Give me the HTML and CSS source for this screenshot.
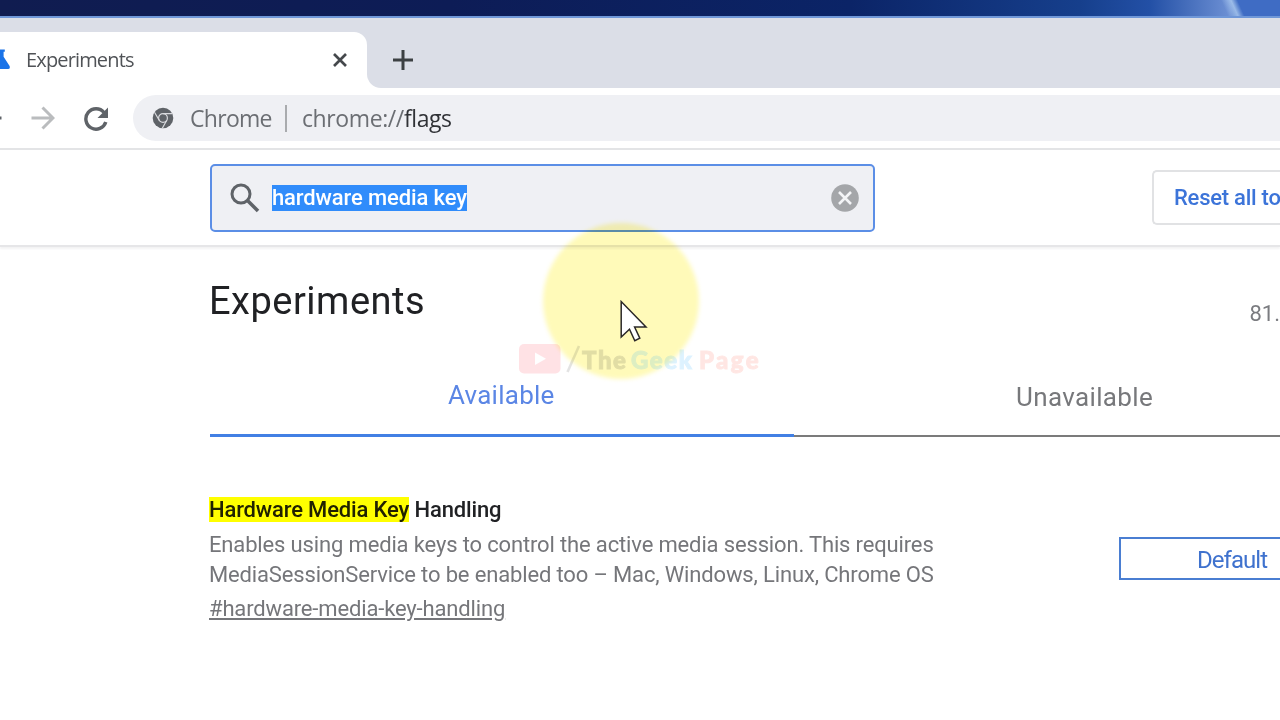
FILE: index.html
```
<!DOCTYPE html>
<html lang="en">
<head>
    <meta charset="UTF-8">
    <meta name="viewport" content="width=device-width, initial-scale=1.0">
    <title>Experiments</title>
    <link rel="stylesheet" href="styles.css">
</head>
<body>
    <div class="desktop"></div>

    <div class="tab-strip">
        <div class="tab-wrap">
            <div class="tab">
                <svg class="flask" width="10" height="22" viewBox="0 0 10 22">
                    <path d="M0 .5h4.800v2.200H3.600v5L9.600 17Q10.500 20 8 20H0z" fill="#1a73e8"/>
                </svg>
                <span class="tab-title">Experiments</span>
                <svg class="tab-close" width="16" height="16" viewBox="0 0 16 16">
                    <path d="M2 2l12 12M14 2L2 14" stroke="#45484c" stroke-width="2.700"/>
                </svg>
            </div>
        </div>
        <div class="strip-rest">
            <svg width="20" height="20" viewBox="0 0 20 20">
                <path d="M10 0v20M0 10h20" stroke="#3c4043" stroke-width="3"/>
            </svg>
        </div>
    </div>

    <div class="toolbar">
        <svg class="back" width="2" height="4" viewBox="0 0 2 4">
            <path d="M0 .5h1.500v3H0z" fill="#5f6368"/>
        </svg>
        <svg class="forward" width="24" height="24" viewBox="0 0 24 24">
            <path d="M.5 12H22M11.500 1.500L22 12 11.500 22.500" fill="none" stroke="#babcbe" stroke-width="3"/>
        </svg>
        <svg class="reload" width="26" height="26" viewBox="0 0 26 26">
            <path d="M21 6.500A10.200 10.200 0 1 0 22.800 16" fill="none" stroke="#5f6368" stroke-width="3.400"/>
            <path d="M25 1.500v10.500H14.500z" fill="#5f6368"/>
        </svg>
        <div class="omnibox">
            <svg class="chrome-logo" width="22" height="22" viewBox="0 0 22 22">
                <circle cx="11" cy="11" r="10.300" fill="#5f6368"/>
                <circle cx="11" cy="11" r="4.400" fill="#5f6368" stroke="#d9dade" stroke-width="1.200"/>
                <path d="M11 6.600h9.300M7.200 13.200L2.500 5.200M14.800 13.200l-4.500 8" stroke="#d9dade" stroke-width="1.200"/>
            </svg>
            <span class="site-name">Chrome</span>
            <span class="divider"></span>
            <span class="address">chrome://<b>flags</b></span>
        </div>
    </div>

    <header class="flags-header">
        <div class="search">
            <svg class="search-icon" width="30" height="30" viewBox="0 0 30 30">
                <circle cx="11" cy="11" r="9" fill="none" stroke="#5f6368" stroke-width="3"/>
                <path d="M17.500 17.500L28 28" stroke="#5f6368" stroke-width="3.600"/>
            </svg>
            <span class="query">hardware media key</span>
            <svg class="clear" width="28" height="28" viewBox="0 0 28 28">
                <circle cx="14" cy="14" r="13.800" fill="#a4a6a9"/>
                <path d="M8 8l12 12M20 8L8 20" stroke="#f3f4f6" stroke-width="2.600"/>
            </svg>
        </div>
        <button class="reset">Reset all to</button>
    </header>

    <main>
        <div class="title-row">
            <h1>Experiments</h1>
            <span class="version">81.</span>
        </div>

        <div class="tabs">
            <div class="tabs-item selected">Available</div>
            <div class="tabs-item unselected">Unavailable</div>
        </div>

        <div class="experiment">
            <div class="info">
                <h3><mark>Hardware Media Key</mark> Handling</h3>
                <p>Enables using media keys to control the active media session. This requires</p>
                <p>MediaSessionService to be enabled too – Mac, Windows, Linux, Chrome OS</p>
                <a class="permalink">#hardware-media-key-handling</a>
            </div>
            <div class="select">Default</div>
        </div>
    </main>

    <!-- click highlight, channel watermark and pointer lie over the page -->
    <div class="spotlight"></div>
    <div class="watermark">
        <svg width="42" height="30" viewBox="0 0 42 30">
            <rect width="41.500" height="29.500" rx="5" fill="#ff2742"/>
            <path d="M16 8.500l11 6.300-11 6.300z" fill="#fff"/>
        </svg>
        <svg class="slash" width="16" height="28" viewBox="0 0 16 28">
            <path d="M1.500 27L13 1" stroke="#333" stroke-width="2.600"/>
        </svg>
        <span class="the">The</span>
        <span class="geek">Geek</span>
        <span class="page">Page</span>
    </div>
    <svg class="pointer" width="28" height="44" viewBox="0 0 28 44">
        <path d="M1.200 2.500V38l8.300-7.800 5.300 11.500 5-2.500-5.200-11.200H26z" fill="#fff" stroke="#2b2828" stroke-width="1.500"/>
    </svg>
</body>
</html>
```
FILE: styles.css
```
        * {
            box-sizing: border-box;
        }
        body {
            font-family: Roboto, "Liberation Sans", sans-serif;
            margin: 0;
            width: 1280px;
            height: 720px;
            overflow: hidden;
            position: relative;
            background-color: #fff;
            color: #202124;
            white-space: nowrap;
        }
        svg {
            display: block;
            flex: none;
        }
        .desktop {
            height: 18px;
            border-bottom: 2px solid #6f97d8;
            background: linear-gradient(66deg, transparent 1122px, rgba(169, 200, 238, 0.8) 1131px, #3f6cc4 1137px),
                        linear-gradient(90deg, #101c50 0, #0d1c56 450px, #0b2467 850px, #163f8c 1080px, #2350a6 1150px, #6d90d4 1230px, #3f6cc4 1245px);
        }
        .tab-strip {
            display: flex;
            height: 70px;
            background-color: #fff;
        }
        .tab-wrap {
            width: 367px;
            padding-top: 14px;
            background-color: #dbdee7;
        }
        .tab {
            display: flex;
            align-items: center;
            height: 56px;
            background-color: #fff;
            border-top-right-radius: 13px;
        }
        .tab-title {
            font-family: "Open Sans", "Noto Sans", sans-serif;
            font-size: 20px;
            line-height: 28px;
            letter-spacing: -0.85px;
            color: #505357;
            margin-left: 16px;
            margin-top: -1px;
            width: 306px;
        }
        .strip-rest {
            flex: 1;
            padding: 32px 0 0 26px;
            background-color: #dbdee7;
            border-bottom-left-radius: 14px;
        }
        .toolbar {
            display: flex;
            align-items: center;
            height: 62px;
            border-bottom: 2px solid #e3e4e6;
        }
        .forward {
            margin-left: 29px;
        }
        .reload {
            margin-left: 28px;
            margin-top: 1px;
        }
        .omnibox {
            display: flex;
            align-items: center;
            flex: 1;
            height: 46px;
            margin-left: 24px;
            padding-left: 19px;
            background-color: #eff0f4;
            border-radius: 23px 0 0 23px;
            font-family: "Open Sans", "Noto Sans", sans-serif;
            font-size: 23px;
            letter-spacing: -0.4px;
            color: #6b6e73;
        }
        .site-name {
            margin-left: 16px;
            width: 95px;
            letter-spacing: -0.7px;
        }
        .divider {
            width: 2px;
            height: 27px;
            background-color: #a9abae;
        }
        .address {
            margin-left: 15px;
        }
        .address b {
            font-weight: normal;
            color: #303236;
        }
        .flags-header {
            display: flex;
            align-items: flex-start;
            justify-content: space-between;
            height: 97px;
            padding: 14px 0 0 210px;
            border-bottom: 2px solid #e6e6e8;
            box-shadow: 0 2px 2px #f3f3f4;
        }
        .search {
            display: flex;
            align-items: center;
            width: 665px;
            height: 68px;
            padding: 0 14px 0 18px;
            background-color: #eff0f4;
            border: 2px solid #5b8ee6;
            border-radius: 5px;
        }
        .query {
            margin-left: 12px;
            margin-right: auto;
            height: 26px;
            line-height: 26px;
            font-size: 22px;
            font-weight: 500;
            letter-spacing: -0.12px;
            color: #fff;
            background-color: #308cfb;
        }
        .reset {
            width: 128px;
            height: 55px;
            margin-top: 6px;
            padding: 0 0 0 20px;
            text-align: left;
            font-family: inherit;
            font-size: 22px;
            font-weight: 500;
            letter-spacing: -0.25px;
            color: #3c74d9;
            background-color: #fff;
            border: 2px solid #e1e2e4;
            border-right: none;
            border-radius: 5px 0 0 5px;
        }
        main {
            padding-left: 210px;
        }
        .title-row {
            display: flex;
            height: 113px;
            padding-top: 31px;
        }
        h1 {
            margin: 0 0 0 -1px;
            width: 1041px;
            font-size: 38px;
            line-height: 46px;
            font-weight: normal;
            letter-spacing: 0.5px;
        }
        .version {
            padding-top: 23px;
            font-size: 22px;
            line-height: 26px;
            color: #7b7c80;
        }
        .tabs {
            display: flex;
            height: 77px;
        }
        .tabs-item {
            padding-top: 21px;
            font-size: 26px;
            line-height: 32px;
            letter-spacing: 0.25px;
        }
        .selected {
            width: 584px;
            padding-top: 19px;
            padding-left: 238px;
            color: #5b86e5;
            border-bottom: 3px solid #4280e4;
        }
        .unselected {
            flex: 1;
            padding-left: 222px;
            letter-spacing: 0.35px;
            color: #77787b;
            border-bottom: 2px solid #7b7b7b;
        }
        .experiment {
            display: flex;
            justify-content: space-between;
            padding-top: 59px;
        }
        .info {
            margin-left: -1px;
            font-size: 22px;
            letter-spacing: -0.15px;
            color: #75767a;
        }
        h3 {
            margin: 0 0 7px;
            font-size: 22px;
            line-height: 27px;
            font-weight: 500;
            color: #202124;
        }
        mark {
            background-color: #ff0;
            color: #202100;
        }
        .info p {
            margin: 0;
            line-height: 30px;
        }
        .permalink {
            display: block;
            line-height: 37px;
            text-decoration: underline;
        }
        .select {
            width: 161px;
            height: 43px;
            margin-top: 41px;
            padding-left: 76px;
            font-size: 24px;
            line-height: 42px;
            letter-spacing: -0.95px;
            color: #3f72ce;
            border: 2px solid #4a7ed2;
            border-right: none;
        }
        .spotlight {
            position: absolute;
            left: 543px;
            top: 223px;
            width: 156px;
            height: 156px;
            border-radius: 50%;
            background-color: #fffab9;
            mix-blend-mode: multiply;
            filter: blur(2px);
        }
        .watermark {
            position: absolute;
            left: 519px;
            top: 344px;
            display: flex;
            align-items: center;
            height: 30px;
            font-family: Lato, sans-serif;
            font-weight: 900;
            font-size: 24px;
            letter-spacing: 1.6px;
            opacity: 0.13;
        }
        .slash {
            margin-left: 5px;
        }
        .the {
            width: 49px;
            color: #222;
            -webkit-text-stroke: 1px #222;
        }
        .geek {
            width: 68px;
            color: #00a0ff;
            -webkit-text-stroke: 1px #00a0ff;
        }
        .page {
            color: #ff4a32;
            letter-spacing: 2.4px;
            -webkit-text-stroke: 1px #ff4a32;
        }
        .pointer {
            position: absolute;
            left: 620px;
            top: 299px;
        }
```
